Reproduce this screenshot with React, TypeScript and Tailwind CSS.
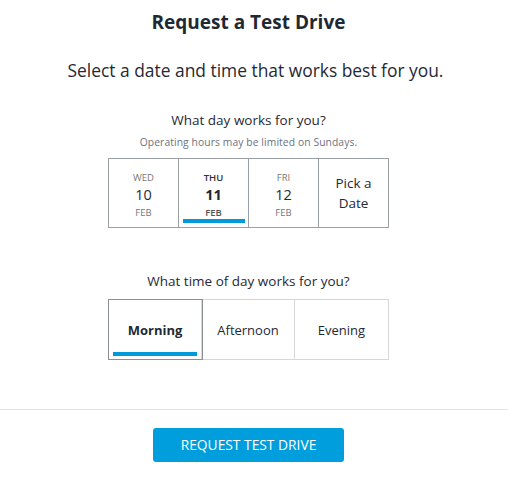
import React, { useState } from 'react';

const days = [
  { dow: 'WED', day: '10', mon: 'FEB' },
  { dow: 'THU', day: '11', mon: 'FEB' },
  { dow: 'FRI', day: '12', mon: 'FEB' },
];

const times = ['Morning', 'Afternoon', 'Evening'];

export default function App() {
  const [day, setDay] = useState(1);
  const [time, setTime] = useState(0);

  return (
    <div className="w-[510px] h-[477px] bg-white text-[#1f2933] font-['Open_Sans',sans-serif]">
      <div className="w-[497px] flex flex-col items-center">
        <h1 className="mt-[9px] text-[19px] font-bold leading-[26px]">Request a Test Drive</h1>
        <p className="mt-[23px] text-[17.4px] leading-[24px] ml-[14px]">Select a date and time that works best for you.</p>

        <p className="mt-[29px] text-[13.5px] leading-[18px]">What day works for you?</p>
        <p className="mt-[6px] text-[10.3px] leading-[14px] text-[#6b7280] tracking-[0.1px]">Operating hours may be limited on Sundays.</p>

        <div className="mt-[9px] flex border border-[#9aa0a6]">
          {days.map((d, i) => (
            <button
              key={d.day}
              onClick={() => setDay(i)}
              className="relative w-[70px] h-[68px] border-r border-[#9aa0a6] flex flex-col items-center pt-[12px]"
            >
              <span className={`text-[9.5px] leading-[13px] ${i === day ? 'text-[#333] font-semibold' : 'text-[#777]'}`}>{d.dow}</span>
              <span className={`text-[14.5px] leading-[20px] mt-[1px] ${i === day ? 'font-bold' : ''}`}>{d.day}</span>
              <span className={`text-[9.5px] leading-[13px] mt-[1px] ${i === day ? 'text-[#555] font-semibold' : 'text-[#777]'}`}>{d.mon}</span>
              {i === day && <span className="absolute left-[4px] right-[3px] bottom-[4px] h-[4px] bg-[#0099da]" />}
            </button>
          ))}
          <button className="w-[69px] h-[68px] flex items-center justify-center text-[13.5px] leading-[20px] text-center">
            Pick a<br />Date
          </button>
        </div>

        <p className="mt-[44px] text-[13.5px] leading-[18px]">What time of day works for you?</p>

        <div className="mt-[9px] flex border border-[#d5d7da]">
          {times.map((t, i) => (
            <button
              key={t}
              onClick={() => setTime(i)}
              className={`relative w-[93px] h-[59px] flex items-center justify-center pt-[2px] text-[13px] ${
                i < times.length - 1 ? 'border-r border-[#d5d7da]' : ''
              } ${i === time ? 'font-bold outline outline-1 outline-[#8a9096]' : ''}`}
            >
              {t}
              {i === time && <span className="absolute left-[4px] right-[4px] bottom-[3px] h-[4px] bg-[#0099da]" />}
            </button>
          ))}
        </div>
      </div>

      <div className="mt-[49px] w-[508px] border-t border-[#e3e3e3]" />

      <div className="w-[497px] flex justify-center">
        <button className="mt-[18px] w-[191px] h-[34px] rounded-[3px] bg-[#009edd] text-white text-[13.8px]">
          REQUEST TEST DRIVE
        </button>
      </div>
    </div>
  );
}
